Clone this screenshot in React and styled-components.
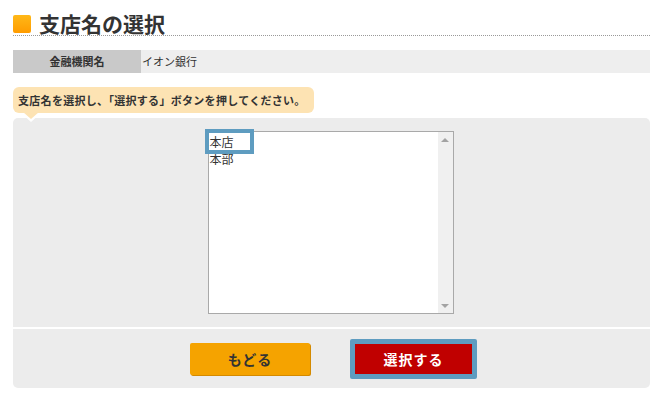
import { useState } from "react";
import styled, { createGlobalStyle } from "styled-components";

const GlobalStyle = createGlobalStyle`
  html, body { margin: 0; padding: 0; background: #fff; }
  body {
    font-family: "Noto Sans CJK JP", "Noto Sans", sans-serif;
    color: #333;
  }
`;

const Page = styled.div`
  width: 637px;
  padding: 12px 10px 0 13px;
`;

const TitleBar = styled.div`
  display: flex;
  align-items: center;
  gap: 8px;
  height: 22px;
  padding-bottom: 1px;
  border-bottom: 1px dotted #999;
  margin-bottom: 14px;
`;

const TitleMark = styled.span`
  width: 18px;
  height: 18px;
  border-radius: 2px;
  background: linear-gradient(180deg, #ffb818 0%, #ff9c00 100%);
  margin-top: 1px;
`;

const Title = styled.h1`
  margin: 0;
  font-size: 21px;
  font-weight: bold;
  line-height: 22px;
  color: #333;
`;

const InfoRow = styled.div`
  display: grid;
  grid-template-columns: 128px 1fr;
  height: 23px;
  font-size: 11px;
  line-height: 23px;
`;

const InfoLabel = styled.div`
  background: #c9c9c9;
  font-weight: bold;
  text-align: center;
`;

const InfoValue = styled.div`
  background: #eeeeee;
  padding-left: 1px;
`;

const Balloon = styled.div`
  position: relative;
  width: fit-content;
  margin-top: 14px;
  padding: 0 8px 0 5px;
  height: 26px;
  line-height: 26px;
  font-size: 11px;
  font-weight: bold;
  letter-spacing: 0.3px;
  background: #fde3b3;
  border-radius: 6px;

  &::before {
    content: "";
    position: absolute;
    left: 8px;
    bottom: -9px;
    border-left: 10px solid transparent;
    border-right: 10px solid transparent;
    border-top: 9px solid #fff;
    z-index: 1;
  }
  &::after {
    content: "";
    position: absolute;
    left: 10px;
    bottom: -6px;
    border-left: 8px solid transparent;
    border-right: 8px solid transparent;
    border-top: 7px solid #fde3b3;
    z-index: 2;
  }
`;

const Panel = styled.div`
  margin-top: 5px;
  background: #ececec;
  border-radius: 5px;
  overflow: hidden;
`;

const ListArea = styled.div`
  display: flex;
  justify-content: center;
  padding: 13px 0 13px;
  border-bottom: 2px solid #fff;
`;

const ListBox = styled.div`
  display: flex;
  width: 244px;
  height: 181px;
  margin-left: -2px;
  background: #fff;
  border: 1px solid #a9a9a9;
`;

const Options = styled.div`
  flex: 1;
  padding-top: 1px;
  font-size: 12px;
`;

const Option = styled.div`
  width: 40px;
  height: 17px;
  line-height: 17px;
  padding-left: 1px;
  cursor: default;
  outline: ${(p) => (p.$focused ? "4px solid #5e9cc0" : "none")};
`;

const ScrollTrack = styled.div`
  width: 15px;
  background: #f0f0f0;
  display: flex;
  flex-direction: column;
  justify-content: space-between;
  align-items: center;
  padding: 6px 0 5px;
`;

const Arrow = styled.span`
  width: 0;
  height: 0;
  border-left: 4px solid transparent;
  border-right: 4px solid transparent;
  ${(p) =>
    p.$up
      ? "border-bottom: 4px solid #a3a3a3;"
      : "border-top: 4px solid #a3a3a3;"}
`;

const ButtonArea = styled.div`
  display: flex;
  justify-content: center;
  align-items: center;
  gap: 40px;
  padding: 10px 0 9px 4px;
`;

const Button = styled.button`
  font-family: inherit;
  font-size: 14px;
  font-weight: bold;
  width: ${(p) => (p.$primary ? "127px" : "120px")};
  height: ${(p) => (p.$primary ? "40px" : "32px")};
  border-radius: 2px;
  cursor: pointer;
  color: ${(p) => (p.$primary ? "#fff" : "#333")};
  background: ${(p) => (p.$primary ? "#c00000" : "#f5a300")};
  border: ${(p) => (p.$primary ? "5px solid #5e9cc0" : "none")};
  box-shadow: ${(p) => (p.$primary ? "none" : "1px 1px 0 #d48a00")};
  letter-spacing: 1px;
`;

export default function App() {
  const [selected, setSelected] = useState(0);
  const branches = ["本店", "本部"];

  return (
    <>
      <GlobalStyle />
      <Page>
        <TitleBar>
          <TitleMark />
          <Title>支店名の選択</Title>
        </TitleBar>

        <InfoRow>
          <InfoLabel>金融機関名</InfoLabel>
          <InfoValue>イオン銀行</InfoValue>
        </InfoRow>

        <Balloon>支店名を選択し、「選択する」ボタンを押してください。</Balloon>

        <Panel>
          <ListArea>
            <ListBox>
              <Options>
                {branches.map((b, i) => (
                  <Option
                    key={b}
                    $focused={i === selected}
                    onClick={() => setSelected(i)}
                  >
                    {b}
                  </Option>
                ))}
              </Options>
              <ScrollTrack>
                <Arrow $up />
                <Arrow />
              </ScrollTrack>
            </ListBox>
          </ListArea>
          <ButtonArea>
            <Button>もどる</Button>
            <Button $primary>選択する</Button>
          </ButtonArea>
        </Panel>
      </Page>
    </>
  );
}
